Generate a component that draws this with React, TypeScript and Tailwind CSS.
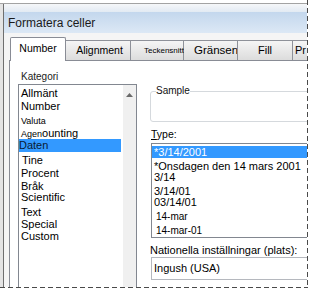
export default function App() {
  return (
    <div className="w-[311px] h-[289px] bg-white overflow-hidden flex flex-col font-['Liberation_Sans',Arial,sans-serif] text-black">
      <div className="flex h-[287px] shrink-0">
        <div className="w-[307px] shrink-0 flex flex-col overflow-hidden">
          <div className="h-[3px] shrink-0" />
          <div className="h-px shrink-0 bg-[#a3a3a3]" />
          <div className="flex flex-1 min-h-0">
            <div className="w-[3px] shrink-0 bg-[#e4e4e4]" />
            <div className="w-px shrink-0 bg-[#6f6f6f]" />
            <div className="flex-1 min-w-0 flex flex-col">
              <div className="h-[8px] shrink-0 bg-gradient-to-b from-[#f6f7f9] to-[#e2eaf3]" />
              <div className="h-[21px] shrink-0 bg-gradient-to-b from-[#c3d7ed] to-[#dce8f5] flex items-center pl-[4px] text-[12px] text-[#1a1a1a] whitespace-nowrap">
                Formatera celler
              </div>
              <div className="flex-1 min-h-0 bg-[#f5f5f5] flex pl-[5px]">
                <div className="flex-1 min-w-0 flex flex-col">
                  {/* tabs */}
                  <div className="h-[27px] shrink-0 flex items-end text-[10.5px] whitespace-nowrap">
                    <div className="relative z-10 ml-px -mb-px w-[56px] h-[24px] shrink-0 bg-white border-l border-t border-r border-[#898c95] rounded-t-[2px] flex items-center justify-center pb-[2px]">
                      Number
                    </div>
                    <div className="w-[65px] h-[20px] shrink-0 bg-gradient-to-b from-[#f5f5f5] to-[#dcdcdc] border-t border-r border-[#8e9199] flex items-center justify-center pl-[3px]">
                      Alignment
                    </div>
                    <div className="w-[53px] h-[20px] shrink-0 bg-gradient-to-b from-[#f5f5f5] to-[#dcdcdc] border-t border-r border-[#8e9199] flex items-center pl-[13px] text-[8px] overflow-visible">
                      Teckensnitt
                    </div>
                    <div className="w-[54px] h-[20px] shrink-0 bg-gradient-to-b from-[#f5f5f5] to-[#dcdcdc] border-t border-r border-[#8e9199] flex items-center pl-[10px] text-[11.5px] overflow-hidden">
                      Gränsen
                    </div>
                    <div className="w-[55px] h-[20px] shrink-0 bg-gradient-to-b from-[#f5f5f5] to-[#dcdcdc] border-t border-r border-[#8e9199] flex items-center justify-center text-[11px]">
                      Fill
                    </div>
                    <div className="w-[40px] h-[20px] shrink-0 bg-gradient-to-b from-[#f5f5f5] to-[#dcdcdc] border-t border-r border-[#8e9199] flex items-center pl-[2px] text-[11px]">
                      Pr
                    </div>
                  </div>
                  {/* panel */}
                  <div className="flex-1 min-h-0 bg-white border-l border-t border-[#898c95] flex overflow-hidden">
                    {/* left column */}
                    <div className="ml-[8px] w-[119px] shrink-0 flex flex-col">
                      <div className="mt-[10px] h-[12px] leading-[12px] pl-[3px] text-[10px] text-[#222]">
                        Kategori
                      </div>
                      <div className="mt-px h-[220px] shrink-0 border border-[#828790] flex text-[11px]">
                        <div className="w-[102px] shrink-0 flex flex-col">
                          <div className="mt-[1.5px] h-[13px] leading-[13px] pl-[2px]">Allmänt</div>
                          <div className="h-[13px] leading-[13px] pl-[2px]">Number</div>
                          <div className="mt-[2px] h-[13px] leading-[13px] pl-[2px] text-[9px]">Valuta</div>
                          <div className="-mt-px h-[13px] leading-[13px] pl-[2px] flex items-baseline">
                            <span className="text-[9px]">Agen</span>
                            <span>ounting</span>
                          </div>
                          <div className="-mt-px h-[13px] leading-[13px] bg-[#3399ff] text-[#0a1a33]">Daten</div>
                          <div className="mt-[2px] h-[13px] leading-[13px] pl-[3px]">Tine</div>
                          <div className="h-[13px] leading-[13px] pl-[2px]">Procent</div>
                          <div className="h-[13px] leading-[13px] pl-[2px]">Bråk</div>
                          <div className="-mt-[2px] h-[13px] leading-[13px] pl-[2px]">Scientific</div>
                          <div className="mt-[2.5px] h-[12px] leading-[12px] pl-[2px]">Text</div>
                          <div className="h-[12px] leading-[12px] pl-[2px]">Special</div>
                          <div className="h-[12px] leading-[12px] pl-[2px]">Custom</div>
                        </div>
                        <div className="w-[2px] shrink-0" />
                        <div className="w-[13px] shrink-0 bg-[#f0f0f0] flex flex-col items-center pt-[8px]">
                          <svg width="7" height="4" viewBox="0 0 7 4">
                            <polygon points="3.5,0 7,4 0,4" fill="#6a6a6a" />
                          </svg>
                        </div>
                      </div>
                    </div>
                    {/* right column */}
                    <div className="ml-[13px] w-[200px] shrink-0 flex flex-col">
                      <fieldset className="mt-[24px] h-[37px] shrink-0 border border-[#d5d9dd] rounded-[3px] px-[5px]">
                        <legend className="text-[10px] leading-[12px] px-0 text-[#111]">Sample</legend>
                      </fieldset>
                      <div className="mt-[6px] h-[12px] leading-[12px] pl-px text-[10.5px]">
                        <span className="underline underline-offset-1">T</span>ype:
                      </div>
                      <div className="mt-[3px] ml-px h-[95px] shrink-0 border border-[#828790] overflow-hidden flex flex-col text-[11px] whitespace-nowrap">
                        <div className="mt-[2px] h-[12px] leading-[12px] bg-[#3399ff] text-white pl-[2px]">*3/14/2001</div>
                        <div className="mt-[2px] h-[13px] leading-[13px] pl-[2px]">*Onsdagen den 14 mars 2001</div>
                        <div className="-mt-[2px] h-[13px] leading-[13px] pl-[2px]">3/14</div>
                        <div className="mt-px h-[13px] leading-[13px] pl-[2px]">3/14/01</div>
                        <div className="-mt-[2px] h-[13px] leading-[13px] pl-[2px]">03/14/01</div>
                        <div className="mt-px h-[13px] leading-[13px] pl-[4px] text-[10px]">14-mar</div>
                        <div className="mt-px h-[13px] leading-[13px] pl-[4px] text-[10px]">14-mar-01</div>
                      </div>
                      <div className="mt-[6px] h-[12px] leading-[12px] text-[11px] whitespace-nowrap">
                        Nationella inställningar (plats):
                      </div>
                      <div className="mt-px ml-px h-[23px] shrink-0 border border-[#b5b8be] flex items-center pl-[2px] text-[11px]">
                        Ingush (USA)
                      </div>
                    </div>
                  </div>
                </div>
              </div>
            </div>
          </div>
        </div>
        <div className="w-px shrink-0 bg-[repeating-linear-gradient(to_bottom,#4a4a4a_0_5px,transparent_5px_8px)]" />
      </div>
      <div className="w-[308px] h-px shrink-0 bg-[repeating-linear-gradient(to_right,#4a4a4a_0_5px,transparent_5px_8px)]" />
    </div>
  );
}
